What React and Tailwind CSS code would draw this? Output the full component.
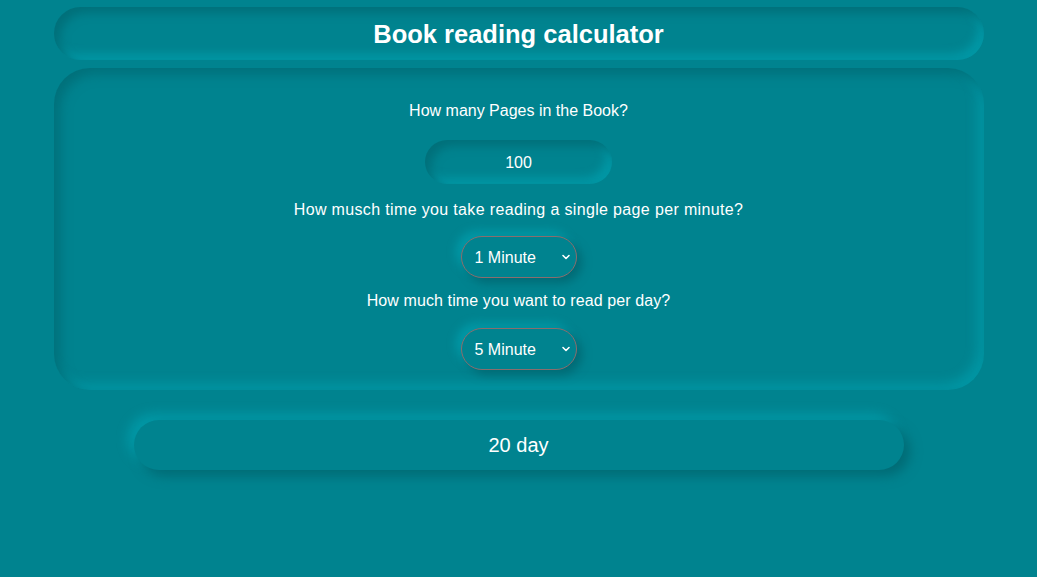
import React from "react";

function Chevron() {
  return (
    <svg width="10" height="10" viewBox="0 0 10 10" className="pointer-events-none absolute right-[5px] top-1/2 -translate-y-1/2">
      <path d="M2 3.5 L5 6.5 L8 3.5" fill="none" stroke="white" strokeWidth="1.6" strokeLinecap="round" strokeLinejoin="round" />
    </svg>
  );
}

function Select({ value }) {
  return (
    <div className="relative w-[116px] h-[42px] rounded-full border border-[#8a6d6d] bg-[#00838f] shadow-[5px_5px_10px_#006b75,-5px_-5px_10px_#009aa8]">
      <div className="h-full flex items-center pl-[13px] pt-[1px] text-white text-[16px]">{value}</div>
      <Chevron />
    </div>
  );
}

export default function App() {
  return (
    <div
      className="min-h-[577px] w-full bg-[#00838f] flex flex-col items-center pt-[7px] text-white"
      style={{ fontFamily: '"Liberation Sans", Arial, Helvetica, sans-serif' }}
    >
      <div className="w-[930px] h-[53px] rounded-[27px] flex items-center justify-center pt-[2px] shadow-[inset_6px_6px_10px_#00707a,inset_-6px_-6px_10px_#0098a6]">
        <h1 className="text-[25.5px] font-bold leading-none">Book reading calculator</h1>
      </div>

      <div className="mt-[8px] w-[930px] h-[322px] rounded-[36px] flex flex-col items-center shadow-[inset_6px_6px_12px_#00707a,inset_-6px_-6px_12px_#0098a6]">
        <p className="mt-[34px] text-[16px] leading-[18px]">How many Pages in the Book?</p>
        <div className="mt-[20px] w-[187px] h-[44px] rounded-full flex items-center justify-center pt-[1px] text-[16px] shadow-[inset_6px_6px_10px_#00707a,inset_-6px_-6px_10px_#0098a6]">
          100
        </div>
        <p className="mt-[17px] text-[16px] leading-[18px] tracking-[0.35px]">How musch time you take reading a single page per minute?</p>
        <div className="mt-[17px]">
          <Select value="1 Minute" />
        </div>
        <p className="mt-[14px] text-[16px] leading-[18px] tracking-[0.1px]">How much time you want to read per day?</p>
        <div className="mt-[18px]">
          <Select value="5 Minute" />
        </div>
      </div>

      <div className="mt-[30px] w-[770px] h-[50px] rounded-[25px] bg-[#00838f] flex items-center justify-center text-[20px] shadow-[6px_6px_12px_#006b75,-6px_-6px_12px_#009aa8]">
        20 day
      </div>
    </div>
  );
}
